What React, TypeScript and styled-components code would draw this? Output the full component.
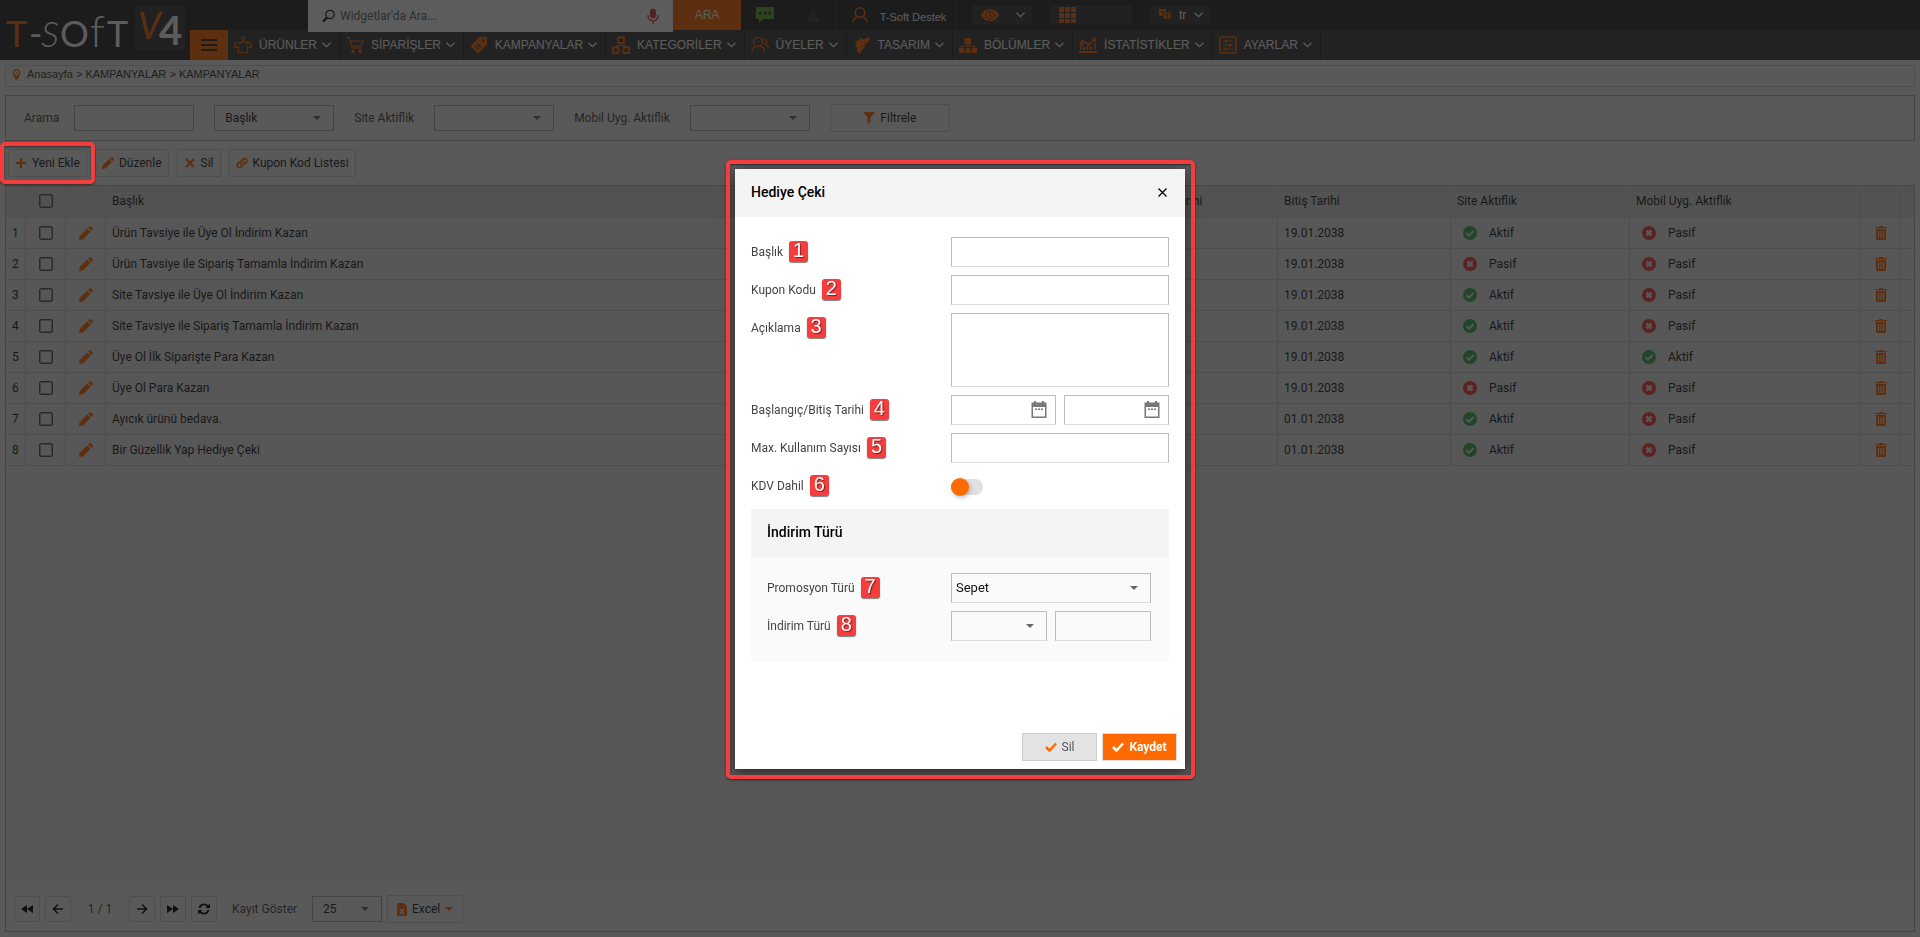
import React from 'react';
import styled, { createGlobalStyle, css } from 'styled-components';

const c = {
  orange: '#ff6a00',
  red: '#f63c3c',
  header: '#2a2a2a',
  nav: '#3f3f3f',
  navLine: '#262626',
  page: '#f3f3f3',
  panel: '#f5f5f5',
  grid: '#ededed',
  gridHead: '#dedede',
  line: '#b2b2b2',
  softLine: '#d0d0d0',
  text: '#1c1c1c',
  label: '#484848',
};

const Global = createGlobalStyle`
  *, *::before, *::after { box-sizing: border-box; }
  body { margin: 0; background: ${c.page}; color: ${c.text}; font: 12px/16px Roboto, sans-serif; }
  button, input, select, textarea { font: inherit; color: inherit; margin: 0; border-radius: 0; outline: none; }
  button { padding: 0; cursor: pointer; }
  svg { display: block; flex: none; }
`;

/* ---------- page shell ---------- */

const Page = styled.div`
  min-height: 100vh;
  display: flex;
  flex-direction: column;
`;

const Header = styled.header`
  display: flex;
  height: 60px;
  background: ${c.header};
  color: #fff;
  font-family: 'Liberation Sans', sans-serif;
`;

const LogoLink = styled.a`
  width: 190px;
  flex: none;
`;

const HeaderMain = styled.div`
  flex: 1;
  min-width: 0;
`;

const TopRow = styled.div`
  display: flex;
  height: 30px;
`;

const SearchBox = styled.label`
  position: relative;
  z-index: 1;
  display: flex;
  align-items: center;
  gap: 5px;
  width: 365px;
  height: 32px;
  margin-left: 118px;
  padding: 0 14px;
  background: #fff;
  color: #222;
`;

const SearchInput = styled.input`
  flex: 1;
  min-width: 0;
  border: 0;
  padding: 0;
  background: transparent;
  font-family: Roboto, sans-serif;
  &::placeholder { color: #666; opacity: 1; }
`;

const SearchButton = styled.button`
  width: 68px;
  height: 30px;
  border: 0;
  background: ${c.orange};
  color: #fff;
`;

const TopCell = styled.button<{ $w: number }>`
  display: flex;
  align-items: center;
  justify-content: center;
  gap: 12px;
  width: ${(p) => p.$w}px;
  height: 30px;
  border: 0;
  border-right: 1px solid #3a3a3a;
  background: transparent;
  color: #fff;
  font-size: 11px;
`;

const UserCell = styled(TopCell)`
  padding-left: 6px;
`;

const UserName = styled.span`
  padding-top: 4px;
`;

const Pills = styled.div`
  display: flex;
  gap: 18px;
  padding: 5px 15px;
`;

const Pill = styled.button<{ $w: number }>`
  display: flex;
  align-items: center;
  gap: 8px;
  width: ${(p) => p.$w}px;
  height: 19px;
  padding: 0 5px 0 9px;
  border: 0;
  border-radius: 3px;
  overflow: hidden;
  background: #3a3a3a;
  color: #fff;
`;

const PillEnd = styled.span`
  margin-left: auto;
  padding-right: 2px;
`;

const Nav = styled.nav`
  display: flex;
  height: 30px;
  background: ${c.nav};
`;

const MenuButton = styled.button`
  display: flex;
  align-items: center;
  justify-content: center;
  width: 38px;
  height: 30px;
  border: 0;
  background: ${c.orange};
`;

const NavLink = styled.a`
  display: flex;
  align-items: center;
  height: 30px;
  padding: 0 8px 0 6px;
  border-right: 1px solid ${c.navLine};
  color: #fff;
  text-decoration: none;
`;

const NavText = styled.span`
  margin: 0 5px 0 7px;
`;

const Content = styled.main`
  flex: 1;
  display: flex;
  flex-direction: column;
  padding: 5px;
`;

const Breadcrumb = styled.nav`
  display: flex;
  gap: 6px;
  height: 22px;
  padding: 1px 6px;
  border: 1px solid ${c.softLine};
  background: ${c.panel};
  color: #333;
  font: 11px/14px 'Liberation Sans', sans-serif;
`;

const CrumbLink = styled.a`
  color: inherit;
  text-decoration: none;
`;

/* ---------- filters and toolbar ---------- */

const FilterBar = styled.form`
  display: flex;
  align-items: center;
  gap: 20px;
  height: 46px;
  margin-top: 8px;
  padding: 0 18px;
  border: 1px solid ${c.line};
  background: ${c.panel};
`;

const Field = styled.label<{ $gap?: number }>`
  display: flex;
  align-items: center;
  gap: ${(p) => p.$gap ?? 20}px;
  color: ${c.label};
`;

const control = css`
  height: 26px;
  padding: 0 10px;
  border: 1px solid ${c.line};
  background: transparent;
  color: ${c.text};
`;

const FilterInput = styled.input`
  ${control}
  width: 120px;
`;

const SelectWrap = styled.span<{ $w: number }>`
  position: relative;
  display: inline-flex;
  width: ${(p) => p.$w}px;
  svg {
    position: absolute;
    right: 13px;
    top: calc(50% - 2px);
    pointer-events: none;
  }
`;

const FilterSelect = styled.select`
  ${control}
  width: 100%;
  appearance: none;
`;

const ToolButton = styled.button<{ $w?: number }>`
  display: flex;
  align-items: center;
  justify-content: center;
  gap: 5px;
  width: ${(p) => (p.$w ? `${p.$w}px` : 'auto')};
  height: 28px;
  padding: 0 6px;
  border: 1px solid ${c.softLine};
  border-radius: 2px;
  background: ${c.panel};
  color: ${c.text};
`;

const Toolbar = styled.div`
  display: flex;
  gap: 8px;
  padding: 8px 3px;
`;

const Marked = styled.div`
  position: relative;
`;

const Mark = styled.span`
  position: absolute;
  z-index: 20;
  inset: -7px -8px;
  border: 4px solid ${c.red};
  border-radius: 5px;
  box-shadow: 0 1px 2px rgba(0, 0, 0, 0.5), inset 0 1px 2px rgba(0, 0, 0, 0.5);
  pointer-events: none;
`;

/* ---------- data grid ---------- */

const GridPanel = styled.section`
  flex: 1;
  display: flex;
  flex-direction: column;
  border: 1px solid ${c.line};
  background: ${c.grid};
`;

const Table = styled.table`
  width: 100%;
  table-layout: fixed;
  border-collapse: separate;
  border-spacing: 0;
`;

const Col = styled.col<{ $w?: number }>`
  width: ${(p) => (p.$w ? `${p.$w}px` : 'auto')};
`;

const cell = css`
  height: 31px;
  padding: 0 6px;
  border-right: 1px solid ${c.softLine};
  border-bottom: 1px solid ${c.softLine};
  text-align: left;
  font-weight: 400;
  white-space: nowrap;
  &:last-child { border-right: 0; }
`;

const Th = styled.th`
  ${cell}
  height: 32px;
  padding-bottom: 2px;
  background: ${c.gridHead};
`;

const Td = styled.td`
  ${cell}
`;

const Centered = styled.div`
  display: flex;
  align-items: center;
  justify-content: center;
`;

const IconButton = styled.button`
  display: flex;
  align-items: center;
  justify-content: center;
  width: 26px;
  height: 26px;
  border: 0;
  background: transparent;
`;

const Check = styled.input`
  appearance: none;
  width: 14px;
  height: 14px;
  border: 1px solid #555;
  border-radius: 2px;
  box-shadow: inset 0 0 0 1px #a0a0a0;
`;

const Status = styled.span`
  display: flex;
  align-items: center;
  gap: 12px;
  padding-left: 6px;
`;

const Pager = styled.footer`
  display: flex;
  align-items: center;
  gap: 5px;
  height: 44px;
  margin-top: auto;
  padding: 0 8px;
  background: ${c.panel};
  color: ${c.label};
`;

const PageButton = styled.button`
  display: flex;
  align-items: center;
  justify-content: center;
  width: 26px;
  height: 26px;
  border: 1px solid ${c.softLine};
  border-radius: 2px;
  background: transparent;
`;

const PageCount = styled.span`
  width: 48px;
  text-align: center;
`;

const PageSize = styled(Field)`
  margin-left: 10px;
`;

/* ---------- modal ---------- */

const Backdrop = styled.div`
  position: fixed;
  z-index: 10;
  inset: 0;
  display: flex;
  align-items: center;
  justify-content: center;
  background: rgba(23, 23, 23, 0.7);
`;

const Dialog = styled.section`
  position: relative;
  display: flex;
  flex-direction: column;
  width: 450px;
  height: 600px;
  background: #fff;
  box-shadow: 0 3px 12px rgba(0, 0, 0, 0.6);
`;

const DialogMark = styled(Mark)`
  inset: -9px -10px -10px -9px;
`;

const DialogHead = styled.header`
  display: flex;
  align-items: center;
  justify-content: space-between;
  height: 48px;
  padding: 0 10px 0 16px;
  background: #f4f4f4;
`;

const Title = styled.h2`
  margin: 0;
  color: #000;
  font-size: 14px;
  font-weight: 500;
  line-height: 16px;
  padding-bottom: 2px;
`;

const DialogBody = styled.form`
  flex: 1;
  display: flex;
  flex-direction: column;
  gap: 8px;
  padding: 20px 16px 0;
`;

const Row = styled.div`
  display: flex;
  align-items: flex-start;
`;

const RowLabel = styled.label<{ $w: number }>`
  display: flex;
  align-items: center;
  gap: 6px;
  width: ${(p) => p.$w}px;
  height: 30px;
  flex: none;
  color: #444;
`;

const Badge = styled.span`
  width: 19px;
  height: 21px;
  border-radius: 3px;
  background: ${c.red};
  box-shadow: 0 1px 1px rgba(0, 0, 0, 0.5);
  color: #fff;
  font: 20px/18px 'Liberation Sans', sans-serif;
  text-align: center;
  text-shadow: 1px 1px 1px rgba(0, 0, 0, 0.5);
`;

const Controls = styled.div`
  flex: 1;
  display: grid;
  grid-auto-flow: column;
  grid-auto-columns: minmax(0, 1fr);
  gap: 8px;
  min-width: 0;
`;

const box = css`
  width: 100%;
  min-width: 0;
  height: 30px;
  padding: 0 4px;
  border: 1px solid #bdbdbd;
  border-bottom-color: #dcdcdc;
  background: transparent;
  color: #111;
  font-size: 13px;
`;

const TextInput = styled.input`
  ${box}
`;

const TextArea = styled.textarea`
  ${box}
  height: 74px;
  resize: none;
`;

const Select = styled.select`
  ${box}
  appearance: none;
`;

const DateBox = styled.span`
  ${box}
  display: flex;
  align-items: center;
  padding-right: 8px;
`;

const DateInput = styled.input`
  flex: 1;
  min-width: 0;
  border: 0;
  padding: 0;
  background: transparent;
`;

const GrowSelect = styled(SelectWrap)`
  width: auto;
`;

const Switch = styled.input`
  appearance: none;
  display: flex;
  align-items: center;
  width: 32px;
  height: 16px;
  margin-top: 8px;
  margin-bottom: 6px;
  border-radius: 8px;
  background: #e0e0e0;
  &::before {
    content: '';
    width: 18px;
    height: 18px;
    border-radius: 50%;
    background: ${c.orange};
    box-shadow: 1px 2px 4px rgba(0, 0, 0, 0.25);
  }
`;

const Group = styled.fieldset`
  min-width: 0;
  margin: 0;
  padding: 0;
  border: 0;
  background: #fafafa;
`;

const GroupHead = styled.div`
  display: flex;
  align-items: center;
  height: 48px;
  padding: 0 16px;
  background: #f4f4f4;
`;

const GroupBody = styled.div`
  display: flex;
  flex-direction: column;
  gap: 8px;
  padding: 16px 18px 20px 16px;
`;

const DialogFoot = styled.footer`
  display: flex;
  justify-content: flex-end;
  gap: 5px;
  padding: 8px;
`;

const ActionButton = styled.button<{ $primary?: boolean }>`
  display: flex;
  align-items: center;
  justify-content: center;
  gap: 5px;
  width: 75px;
  height: 28px;
  border: 1px solid ${(p) => (p.$primary ? '#e0dcd8' : '#cfcfcf')};
  background: ${(p) => (p.$primary ? c.orange : '#e3e3e3')};
  color: ${(p) => (p.$primary ? '#fff' : '#555')};
  font-weight: ${(p) => (p.$primary ? 700 : 400)};
`;

/* ---------- icons ---------- */

const Caret = ({ fill = '#666' }: { fill?: string }) => (
  <svg width="8" height="4" viewBox="0 0 8 4" fill={fill}><path d="M0 0h8L4 4z" /></svg>
);
const Chevron = () => (
  <svg width="9" height="6" viewBox="0 0 9 6" fill="none" stroke="#fff" strokeWidth="1.3"><path d="M.5 .7l4 4 4-4" /></svg>
);
const Pencil = ({ size = 12 }: { size?: number }) => (
  <svg width={size} height={size} viewBox="0 0 14 14" fill={c.orange}>
    <path d="M0 14l.6-4 7.6-7.6 3.4 3.4L4 13.4z" />
    <path d="M9 1.6L10.3.4a1.2 1.2 0 0 1 1.7 0L13.600 2a1.200 1.200 0 0 1 0 1.700L12.400 5z" />
  </svg>
);
const Plus = () => (
  <svg width="12" height="12" viewBox="0 0 12 12" stroke={c.orange} strokeWidth="2"><path d="M6 1v10M1 6h10" /></svg>
);
const Cross = () => (
  <svg width="12" height="12" viewBox="0 0 12 12" stroke={c.orange} strokeWidth="2.400"><path d="M2 2l8 8M10 2l-8 8" /></svg>
);
const LinkIcon = () => (
  <svg width="12" height="12" viewBox="0 0 12 12" fill="none" stroke={c.orange} strokeWidth="1.800" strokeLinecap="round">
    <path d="M5 7.400a2.200 2.200 0 0 1 0-3.200l1.800-2a2.300 2.300 0 0 1 3.300 3.300L9 6.600" />
    <path d="M7 4.600a2.200 2.200 0 0 1 0 3.200l-1.800 2a2.300 2.300 0 0 1-3.300-3.300L3 5.400" />
  </svg>
);
const Funnel = () => (
  <svg width="12" height="12" viewBox="0 0 12 12" fill={c.orange}><path d="M0 0h12L7.500 5.500V10L4.500 12V5.500z" /></svg>
);
const Pin = () => (
  <svg width="9" height="15" viewBox="0 -2 9 15"><path fill={c.orange} d="M4.500 0A3.900 3.900 0 0 0 .6 4c0 2.600 3.900 8 3.900 8s3.900-5.400 3.900-8A3.900 3.900 0 0 0 4.500 0z" /><circle cx="4.500" cy="4" r="2.400" fill={c.panel} /><circle cx="4.500" cy="4" r="1" fill={c.orange} /></svg>
);
const Trash = () => (
  <svg width="12" height="14" viewBox="0 0 12 14">
    <g fill={c.orange}><path d="M4 0h4v1h4v1.200H0V1h4zM1 3h10v9.800a1.200 1.200 0 0 1-1.200 1.200H2.200A1.200 1.200 0 0 1 1 12.800z" /></g>
    <path d="M3.500 5v7M6 5v7M8.500 5v7" stroke={c.grid} />
  </svg>
);
const StatusIcon = ({ on }: { on: boolean }) => (
  <svg width="14" height="14" viewBox="0 0 14 14" fill="none" stroke={c.grid}>
    <circle cx="7" cy="7" r="7" stroke="none" fill={on ? '#3eb254' : '#ff3a36'} />
    {on ? <path d="M3.300 7.200L6 9.600l4.700-4.700" strokeWidth="2" /> : <path d="M4.500 4.500l5 5M9.500 4.500l-5 5" strokeWidth="2.600" />}
  </svg>
);
const Magnifier = () => (
  <svg width="13" height="14" viewBox="0 0 13 14" fill="none" stroke="#222"><circle cx="8" cy="5.500" r="4.200" strokeWidth="1.300" /><path d="M5 8.500L1 12.800" strokeWidth="2.400" /></svg>
);
const Mic = () => (
  <svg width="12" height="16" viewBox="0 0 12 16" fill="none" stroke="#e2323e"><rect x="3.500" y="1" width="5" height="9" rx="2.500" fill="#e2323e" /><path d="M1 7v1a5 5 0 0 0 10 0V7M6 13v3" strokeWidth="1.300" /></svg>
);
const Chat = () => (
  <svg width="18" height="16" viewBox="0 0 18 16"><path fill="#6aa52c" d="M0 0h18v12H7l-4 4v-4H0z" /><path fill={c.header} d="M3 5h2.500v2.500H3zM7.800 5h2.500v2.500H7.800zM12.500 5H15v2.500h-2.500z" /></svg>
);
const Warning = () => (
  <svg width="14" height="13" viewBox="0 0 14 13"><path fill="#3c3c3c" d="M7 0l7 13H0z" /><path d="M7 4.500v4M7 10v1.500" stroke={c.header} strokeWidth="1.500" /></svg>
);
const Person = () => (
  <svg width="16" height="16" viewBox="0 0 16 16" fill="none" stroke={c.orange} strokeWidth="1.400"><circle cx="8" cy="5.500" r="4.700" /><path d="M1 15.500c.4-3 2-5 4.600-6M15 15.500c-.4-3-2-5-4.600-6" /></svg>
);
const Eye = () => (
  <svg width="18" height="12" viewBox="0 0 18 12"><path fill={c.orange} d="M0 6C4-2 14-2 18 6 14 14 4 14 0 6z" /><circle cx="9" cy="6" r="4.200" fill="none" stroke="#3a3a3a" /><path d="M9 3.500V7h2" fill="none" stroke="#3a3a3a" /></svg>
);
const Tiles = () => (
  <svg width="17" height="17" viewBox="0 0 17 17" fill={c.orange}>
    {[0, 1, 2].map((y) => [0, 1, 2].map((x) => <rect key={`${x}${y}`} x={x * 6} y={1 + y * 6} width="5" height="5" />))}
  </svg>
);
const Languages = () => (
  <svg width="12" height="11" viewBox="0 0 12 11"><rect width="7" height="7" rx="1" fill={c.orange} /><rect x="4" y="3" width="8" height="7" rx="1" fill={c.orange} stroke="#3a3a3a" strokeWidth=".8" /><path d="M2 2.500h3M6.500 5h3.500M8 5v3.500" stroke="#3a3a3a" /></svg>
);
const MenuLines = () => (
  <svg width="16" height="14" viewBox="0 0 16 14" stroke="#3a2a20" strokeWidth="2"><path d="M0 2h16M0 7h16M0 12h16" /></svg>
);

const navShapes: Record<string, React.ReactNode> = {
  shirt: <path d="M7.500 2.500A1.500 1.500 0 1 1 9 4V5.500M9 5.500L4.500 8M9 5.500L13.500 8M5 6L1 7.500V11.500l3.500-.6V16.500h9v-5.600l3.500.6V7.500L13 6" />,
  cart: <><path d="M0 1.500h3L6.500 12h9M4.200 5H17l-2 5H6" /><circle cx="7" cy="15.500" r="1.200" fill={c.orange} /><circle cx="14" cy="15.500" r="1.200" fill={c.orange} /></>,
  tag: <><path fill={c.orange} d="M10 1.500h6.500V8L8 16.500 1.500 10z" /><path stroke={c.nav} d="M5 9.500l4 4M7 7.500l4 4" /><circle cx="13.500" cy="4.500" r="1.300" fill={c.nav} stroke="none" /></>,
  boxes: <g strokeWidth="1.800"><path d="M6 1.500h6v5.500H6zM1 11.500h5.500V17H1zM11.500 11.500H17V17h-5.500z" /><path d="M9 7v2.500M4 11.500v-2h10v2" strokeWidth="1" /></g>,
  users: <><circle cx="7" cy="6" r="4.500" /><path d="M.7 16c.3-3 1.800-5 4-5.800M13.500 16c-.3-3-1.800-5-4-5.800" /><path d="M12.500 3.500a2.500 2.500 0 1 1 1 5M15 8.500c1.500.6 2.300 2 2.500 4" /></>,
  brush: <path fill={c.orange} stroke="none" d="M2 6.500L8.500 2l2.500 1.500L15.500.5 17 3l-2.500 4-2 .5L11.500 11 7 17.500l-3-1.500.5-4L2 10.500l2-2z" />,
  sitemap: <><path fill={c.orange} stroke="none" d="M5.500 2h6.500v6H5.500zM0 12h5v5H0zM6.500 12h5v5h-5zM13 12h5v5h-5z" /><path d="M9 8v5M2.500 12.500V10h13v2.500" /></>,
  chart: <><path d="M2 5v9M16 7v7M2 5h3M2 10l4-4 4 3 6-6M13 2.500h3.500V6" strokeWidth="1.500" /><path fill={c.orange} stroke="none" d="M4 11h2v3H4zM7.500 10h2v4h-2zM11 11h2v3h-2zM0 15h18v2H0z" /></>,
  sliders: <><rect x="1" y="1" width="16" height="16" rx="1.500" strokeWidth="1.600" /><path d="M4 5h10M4 9h10M4 13h10" /><path d="M7 3.500v3M11 7.500v3M6.500 11.500v3" strokeWidth="2" /></>,
};
const NavIcon = ({ name }: { name: string }) => (
  <svg width="18" height="18" viewBox="0 0 18 18" fill="none" stroke={c.orange} strokeWidth="1.200">{navShapes[name]}</svg>
);

const Logo = () => (
  <svg width="190" height="60" viewBox="0 0 190 60" fontFamily="Lato, sans-serif" role="img" aria-label="T-Soft V4">
    <rect x="135" y="6" width="50" height="44" rx="4" fill="#3a3a3a" />
    <g fontSize="36" fontWeight="400" fill="#fff">
      <text x="6" y="47" fill={c.orange}>T</text>
      <text x="29" y="47">-</text>
      <text x="41" y="47" fontStyle="italic" fontWeight="300">S</text>
      <text x="60" y="47">O</text>
      <text x="90" y="47" fontSize="44" fontWeight="300">f</text>
      <text x="107" y="47">T</text>
    </g>
    <text x="138" y="39" fontSize="36" fontWeight="400" fontStyle="italic" fill={c.orange}>V</text>
    <text x="159" y="45" fontSize="40" fontWeight="700" fill="#fff">4</text>
  </svg>
);

const pagerShapes: Record<string, React.ReactNode> = {
  first: <path fill="#000" d="M6 2v8L0 6zM12 2v8L6 6z" />,
  prev: <path fill="none" stroke="#000" strokeWidth="1.500" d="M11 6H2M6 1.500L1.500 6 6 10.500" />,
  next: <path fill="none" stroke="#000" strokeWidth="1.500" d="M1 6h9M6 1.500L10.500 6 6 10.500" />,
  last: <path fill="#000" d="M0 2v8l6-4zM6 2v8l6-4z" />,
  refresh: <><path fill="none" stroke="#000" strokeWidth="1.800" d="M1.500 5A4.700 4.700 0 0 1 10 3.500M10.500 7A4.700 4.700 0 0 1 2 8.500" /><path fill="#000" d="M12 .5V5H7.500zM0 11.500V7h4.500z" /></>,
};
const PagerIcon = ({ name }: { name: string }) => (
  <svg width="12" height="12" viewBox="0 0 12 12">{pagerShapes[name]}</svg>
);
const ExcelIcon = () => (
  <svg width="10" height="13" viewBox="0 0 10 13"><path fill={c.orange} d="M1 0h5.500L10 3.500V12a1 1 0 0 1-1 1H1a1 1 0 0 1-1-1V1a1 1 0 0 1 1-1z" /><path d="M3 6l4 5M7 6l-4 5" stroke={c.panel} strokeWidth="1.300" /></svg>
);
const CalendarIcon = () => (
  <svg width="16" height="17" viewBox="0 0 16 17"><path fill="#777" d="M3 0h2v1.500h6V0h2v1.500h2.500V17H.5V1.500H3z" /><path fill="#fff" d="M2 6h12v9.500H2z" /><path fill="#777" d="M4 7.500h2v1.500H4zM7 7.500h2v1.500H7zM10 7.500h2v1.500h-2z" /></svg>
);
const CloseIcon = () => (
  <svg width="9" height="9" viewBox="0 0 9 9" stroke="#000" strokeWidth="1.300"><path d="M.5.5l8 8M8.500.5l-8 8" /></svg>
);
const Tick = ({ color }: { color: string }) => (
  <svg width="12" height="10" viewBox="0 0 12 10" fill="none" stroke={color} strokeWidth="2.500"><path d="M1 5l3.500 3.500L11 1.500" /></svg>
);

/* ---------- data ---------- */

const menu = [
  ['shirt', 'ÜRÜNLER'],
  ['cart', 'SİPARİŞLER'],
  ['tag', 'KAMPANYALAR'],
  ['boxes', 'KATEGORİLER'],
  ['users', 'ÜYELER'],
  ['brush', 'TASARIM'],
  ['sitemap', 'BÖLÜMLER'],
  ['chart', 'İSTATİSTİKLER'],
  ['sliders', 'AYARLAR'],
];

const campaigns: { title: string; end: string; site: boolean; mobile: boolean }[] = [
  { title: 'Ürün Tavsiye ile Üye Ol İndirim Kazan', end: '19.01.2038', site: true, mobile: false },
  { title: 'Ürün Tavsiye ile Sipariş Tamamla İndirim Kazan', end: '19.01.2038', site: false, mobile: false },
  { title: 'Site Tavsiye ile Üye Ol İndirim Kazan', end: '19.01.2038', site: true, mobile: false },
  { title: 'Site Tavsiye ile Sipariş Tamamla İndirim Kazan', end: '19.01.2038', site: true, mobile: false },
  { title: 'Üye Ol İlk Siparişte Para Kazan', end: '19.01.2038', site: true, mobile: true },
  { title: 'Üye Ol Para Kazan', end: '19.01.2038', site: false, mobile: false },
  { title: 'Ayıcık ürünü bedava.', end: '01.01.2038', site: true, mobile: false },
  { title: 'Bir Güzellik Yap Hediye Çeki', end: '01.01.2038', site: true, mobile: false },
];

const columns = [20, 40, 40, undefined, 166, 173, 179, 231, 40, 13];

const ActiveState = ({ on }: { on: boolean }) => (
  <Status><StatusIcon on={on} />{on ? 'Aktif' : 'Pasif'}</Status>
);

const FormRow = ({ id, n, label, width = 200, children }: { id: string; n: number; label: string; width?: number; children: React.ReactNode }) => (
  <Row>
    <RowLabel htmlFor={id} $w={width}>{label}<Badge>{n}</Badge></RowLabel>
    <Controls>{children}</Controls>
  </Row>
);

const CouponDialog = () => (
  <Backdrop>
    <Dialog role="dialog" aria-labelledby="dialog-title">
      <DialogHead>
        <Title id="dialog-title">Hediye Çeki</Title>
        <IconButton aria-label="Kapat"><CloseIcon /></IconButton>
      </DialogHead>
      <DialogBody>
        <FormRow id="title" n={1} label="Başlık"><TextInput id="title" /></FormRow>
        <FormRow id="code" n={2} label="Kupon Kodu"><TextInput id="code" /></FormRow>
        <FormRow id="note" n={3} label="Açıklama"><TextArea id="note" /></FormRow>
        <FormRow id="start" n={4} label="Başlangıç/Bitiş Tarihi">
          <DateBox><DateInput id="start" /><CalendarIcon /></DateBox>
          <DateBox><DateInput aria-label="Bitiş Tarihi" /><CalendarIcon /></DateBox>
        </FormRow>
        <FormRow id="max" n={5} label="Max. Kullanım Sayısı"><TextInput id="max" /></FormRow>
        <FormRow id="vat" n={6} label="KDV Dahil"><Switch id="vat" type="checkbox" /></FormRow>
        <Group>
          <GroupHead><Title>İndirim Türü</Title></GroupHead>
          <GroupBody>
            <FormRow id="promo" n={7} label="Promosyon Türü" width={184}>
              <GrowSelect $w={200}><Select id="promo"><option>Sepet</option></Select><Caret /></GrowSelect>
            </FormRow>
            <FormRow id="discount" n={8} label="İndirim Türü" width={184}>
              <GrowSelect $w={96}><Select id="discount"><option /></Select><Caret /></GrowSelect>
              <TextInput aria-label="İndirim" />
            </FormRow>
          </GroupBody>
        </Group>
      </DialogBody>
      <DialogFoot>
        <ActionButton><Tick color={c.orange} />Sil</ActionButton>
        <ActionButton $primary><Tick color="#fff" />Kaydet</ActionButton>
      </DialogFoot>
      <DialogMark />
    </Dialog>
  </Backdrop>
);

export default function App() {
  return (
    <>
      <Global />
      <Page>
        <Header>
          <LogoLink href="#"><Logo /></LogoLink>
          <HeaderMain>
            <TopRow>
              <SearchBox>
                <Magnifier />
                <SearchInput placeholder="Widgetlar'da Ara..." />
                <Mic />
              </SearchBox>
              <SearchButton>ARA</SearchButton>
              <TopCell $w={49} aria-label="Mesajlar"><Chat /></TopCell>
              <TopCell $w={46} aria-label="Uyarılar"><Warning /></TopCell>
              <UserCell $w={121}><Person /><UserName>T-Soft Destek</UserName></UserCell>
              <Pills>
                <Pill $w={60} aria-label="Görünüm"><Eye /><PillEnd><Chevron /></PillEnd></Pill>
                <Pill $w={82} aria-label="Modüller"><Tiles /></Pill>
                <Pill $w={60}><Languages />tr<PillEnd><Chevron /></PillEnd></Pill>
              </Pills>
            </TopRow>
            <Nav>
              <MenuButton aria-label="Menü"><MenuLines /></MenuButton>
              {menu.map(([icon, text]) => (
                <NavLink key={text} href="#"><NavIcon name={icon} /><NavText>{text}</NavText><Chevron /></NavLink>
              ))}
            </Nav>
          </HeaderMain>
        </Header>

        <Content>
          <Breadcrumb>
            <Pin />
            <span>
              <CrumbLink href="#">Anasayfa</CrumbLink> &gt; <CrumbLink href="#">KAMPANYALAR</CrumbLink> &gt; <CrumbLink href="#">KAMPANYALAR</CrumbLink>
            </span>
          </Breadcrumb>

          <FilterBar>
            <Field $gap={15}>Arama<FilterInput /></Field>
            <SelectWrap $w={120}><FilterSelect aria-label="Arama alanı"><option>Başlık</option></FilterSelect><Caret /></SelectWrap>
            <Field>Site Aktiflik<SelectWrap $w={120}><FilterSelect><option /></FilterSelect><Caret /></SelectWrap></Field>
            <Field>Mobil Uyg. Aktiflik<SelectWrap $w={120}><FilterSelect><option /></FilterSelect><Caret /></SelectWrap></Field>
            <ToolButton type="button" $w={120}><Funnel />Filtrele</ToolButton>
          </FilterBar>

          <Toolbar>
            <Marked><ToolButton><Plus />Yeni Ekle</ToolButton><Mark /></Marked>
            <ToolButton><Pencil />Düzenle</ToolButton>
            <ToolButton><Cross />Sil</ToolButton>
            <ToolButton><LinkIcon />Kupon Kod Listesi</ToolButton>
          </Toolbar>

          <GridPanel>
            <Table>
              <colgroup>{columns.map((w, i) => <Col key={i} $w={w} />)}</colgroup>
              <thead>
                <tr>
                  <Th />
                  <Th><Centered><Check type="checkbox" aria-label="Tümünü seç" /></Centered></Th>
                  <Th />
                  <Th>Başlık</Th>
                  <Th>Başlangıç Tarihi</Th>
                  <Th>Bitiş Tarihi</Th>
                  <Th>Site Aktiflik</Th>
                  <Th>Mobil Uyg. Aktiflik</Th>
                  <Th />
                  <Th />
                </tr>
              </thead>
              <tbody>
                {campaigns.map((row, i) => (
                  <tr key={row.title}>
                    <Td>{i + 1}</Td>
                    <Td><Centered><Check type="checkbox" aria-label={row.title} /></Centered></Td>
                    <Td><Centered><IconButton aria-label="Düzenle"><Pencil size={14} /></IconButton></Centered></Td>
                    <Td>{row.title}</Td>
                    <Td />
                    <Td>{row.end}</Td>
                    <Td><ActiveState on={row.site} /></Td>
                    <Td><ActiveState on={row.mobile} /></Td>
                    <Td><Centered><IconButton aria-label="Sil"><Trash /></IconButton></Centered></Td>
                    <Td />
                  </tr>
                ))}
              </tbody>
            </Table>
            <Pager>
              <PageButton aria-label="İlk"><PagerIcon name="first" /></PageButton>
              <PageButton aria-label="Önceki"><PagerIcon name="prev" /></PageButton>
              <PageCount>1 / 1</PageCount>
              <PageButton aria-label="Sonraki"><PagerIcon name="next" /></PageButton>
              <PageButton aria-label="Son"><PagerIcon name="last" /></PageButton>
              <PageButton aria-label="Yenile"><PagerIcon name="refresh" /></PageButton>
              <PageSize $gap={15}>Kayıt Göster<SelectWrap $w={70}><FilterSelect><option>25</option></FilterSelect><Caret /></SelectWrap></PageSize>
              <ToolButton $w={76}><ExcelIcon />Excel<Caret fill={c.orange} /></ToolButton>
            </Pager>
          </GridPanel>
        </Content>
      </Page>
      <CouponDialog />
    </>
  );
}
